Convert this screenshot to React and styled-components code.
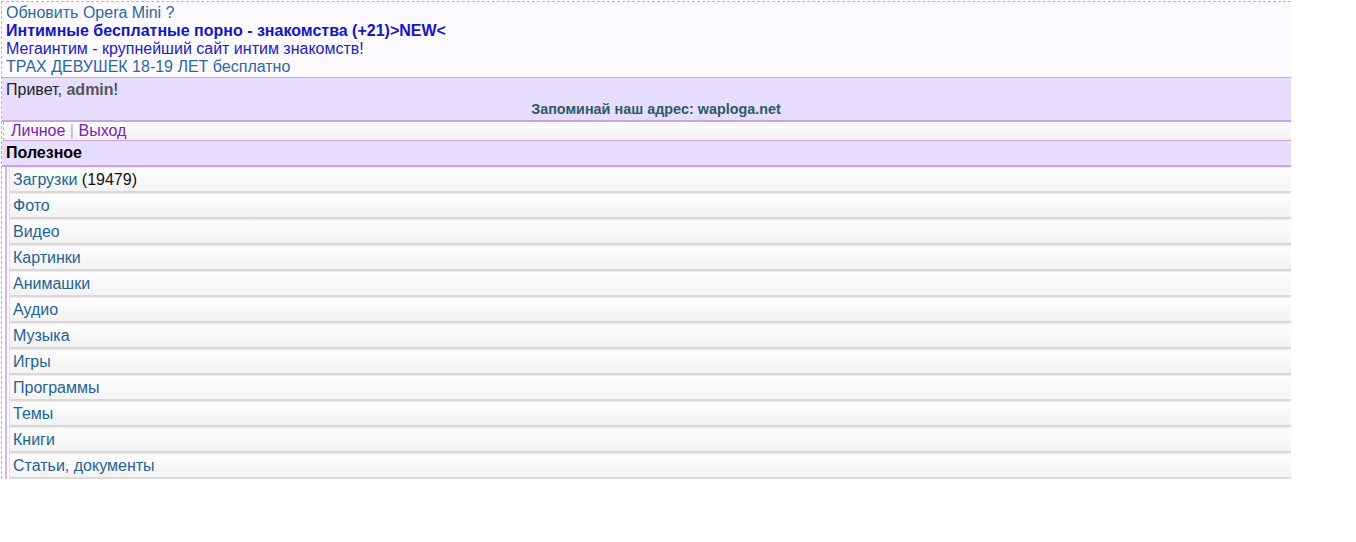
import styled, { createGlobalStyle } from "styled-components";

const Global = createGlobalStyle`
  body {
    margin: 0;
    background: #fff;
    font-family: "Liberation Sans", Arial, sans-serif;
    font-size: 16px;
  }
  a { text-decoration: none; }
`;

const Page = styled.div`
  width: 1289px;
  border-left: 1px dashed #c4a6e6;
  border-top: 1px dashed #c4a6e6;
  margin-left: 1px;
  margin-top: 1px;
`;

const Ads = styled.div`
  background: #fcf9ff;
  padding: 2px 4px 1px 4px;
  line-height: 18px;
  border-bottom: 1px solid #c9a3e3;
`;

const AdLink = styled.a`
  display: block;
  color: ${(p) => p.color};
  font-weight: ${(p) => (p.bold ? "bold" : "normal")};
`;

const Greeting = styled.div`
  background: #e6ddff;
  border-bottom: 2px solid #c9a3e3;
  padding: 3px 4px 2px 4px;
  color: #222;
  line-height: 18px;
`;

const User = styled.b`
  color: #555;
`;

const Notice = styled.div`
  text-align: center;
  font-weight: bold;
  font-size: 14.4px;
  color: #2d5a66;
  margin-top: 1px;
  padding-left: 19px;
  line-height: 18px;
`;

const Menu = styled.div`
  background: linear-gradient(#fdfdfd, #f2f2f2);
  border-left: 1px dashed #c4a6e6;
  margin-left: 1px;
  padding: 0 0 0 7px;
  height: 18px;
  line-height: 18px;
  border-bottom: 1px solid #c9a3e3;
  color: #c9a3e3;
`;

const MenuLink = styled.a`
  color: #7a22b8;
`;

const Section = styled.div`
  background: #e6ddff;
  border-bottom: 2px solid #c9a3e3;
  font-weight: bold;
  color: #000;
  padding: 0 4px;
  height: 24px;
  line-height: 24px;
`;

const List = styled.div`
  margin-left: 3px;
  border-left: 2px solid #d4b4ec;
  padding-left: 2px;
`;

const Item = styled.div`
  height: 23px;
  line-height: 23px;
  background: linear-gradient(#fdfdfd, #f3f3f3);
  border-top: 1px solid #ececec;
  border-left: 1px solid #e2e2e2;
  border-bottom: 2px solid #d9d9d9;
  padding-left: 3px;
  color: #111;
`;

const ItemLink = styled.a`
  color: #1f6396;
`;

const items = [
  ["Загрузки", "(19479)"],
  ["Фото"],
  ["Видео"],
  ["Картинки"],
  ["Анимашки"],
  ["Аудио"],
  ["Музыка"],
  ["Игры"],
  ["Программы"],
  ["Темы"],
  ["Книги"],
  ["Статьи, документы"],
];

export default function App() {
  return (
    <>
      <Global />
      <Page>
        <Ads>
          <AdLink color="#2a6a9c" href="#">Обновить Opera Mini ?</AdLink>
          <AdLink color="#1414c8" bold href="#">
            Интимные бесплатные порно - знакомства (+21)&gt;NEW&lt;
          </AdLink>
          <AdLink color="#2222c0" href="#">Мегаинтим - крупнейший сайт интим знакомств!</AdLink>
          <AdLink color="#2a6a9c" href="#">ТРАХ ДЕВУШЕК 18-19 ЛЕТ бесплатно</AdLink>
        </Ads>
        <Greeting>
          Привет, <User>admin</User>!
          <Notice>Запоминай наш адрес: waploga.net</Notice>
        </Greeting>
        <Menu>
          <MenuLink href="#">Личное</MenuLink> | <MenuLink href="#">Выход</MenuLink>
        </Menu>
        <Section>Полезное</Section>
        <List>
          {items.map(([name, count]) => (
            <Item key={name}>
              <ItemLink href="#">{name}</ItemLink>
              {count && <> {count}</>}
            </Item>
          ))}
        </List>
      </Page>
    </>
  );
}
